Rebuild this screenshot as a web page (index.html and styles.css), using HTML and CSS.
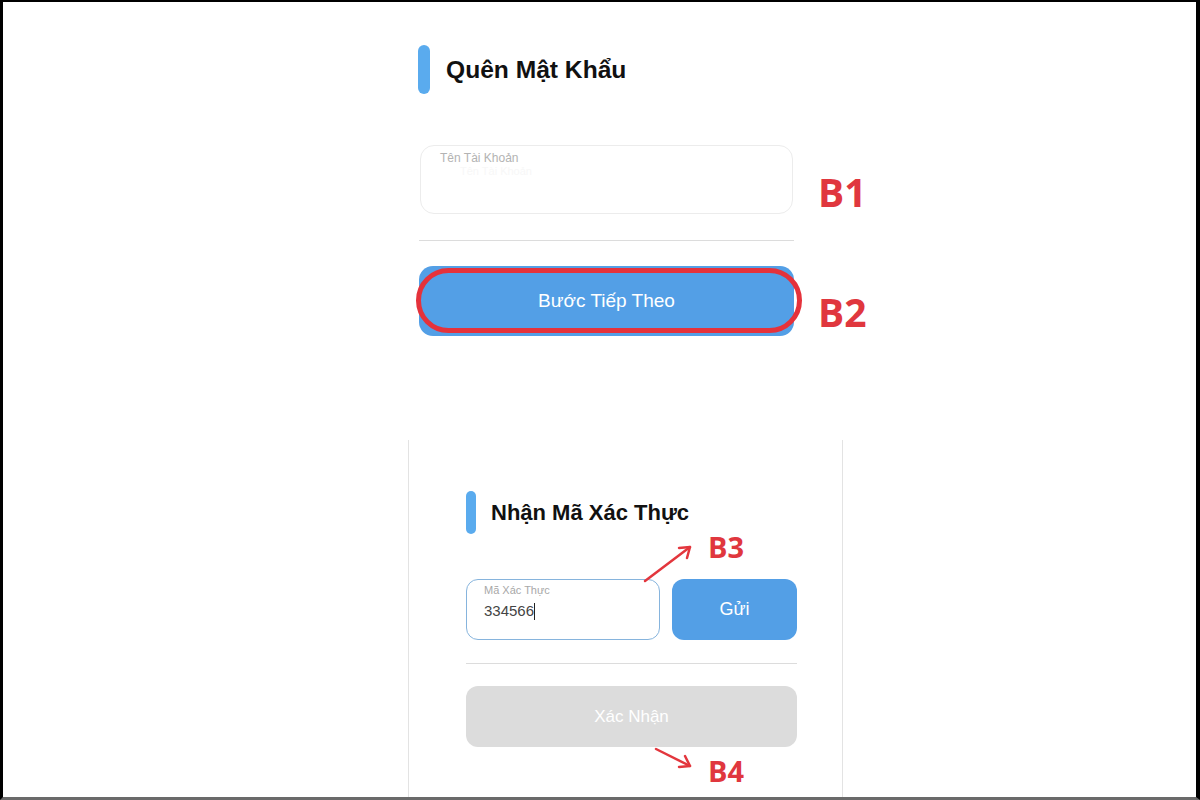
FILE: index.html
```html
<!DOCTYPE html>
<html lang="vi">
<head>
<meta charset="utf-8">
<title>Quên Mật Khẩu</title>
<link rel="stylesheet" href="styles.css">
</head>
<body>
<div class="page">
  <section class="top">
    <div class="heading">
      <span class="bar"></span>
      <h1 class="title">Quên Mật Khẩu</h1>
    </div>
    <div class="field field-user">
      <span class="label">Tên Tài Khoản</span>
      <span class="ghost">Tên Tài Khoản</span>
    </div>
    <hr class="rule">
    <button class="btn btn-primary btn-next">Bước Tiếp Theo</button>
  </section>

  <section class="card">
    <div class="heading heading-sm">
      <span class="bar bar-sm"></span>
      <h2 class="title title-sm">Nhận Mã Xác Thực</h2>
    </div>
    <div class="code-row">
      <div class="field field-code">
        <span class="label label-sm">Mã Xác Thực</span>
        <span class="value">334566<span class="caret"></span></span>
      </div>
      <button class="btn btn-primary btn-send">Gửi</button>
    </div>
    <hr class="rule rule-card">
    <button class="btn btn-disabled">Xác Nhận</button>
  </section>

  <div class="ring"></div>
  <span class="step step-b1">B1</span>
  <span class="step step-b2">B2</span>
  <span class="step step-sm step-b3">B3</span>
  <span class="step step-sm step-b4">B4</span>
  <svg class="arrows" width="1200" height="800" viewBox="0 0 1200 800">
    <g stroke="#e3363d" stroke-width="2.5" fill="none" stroke-linecap="round" stroke-linejoin="round">
      <path d="M645 581 L690 547"/>
      <path d="M679 548 L690 547 L687 558"/>
      <path d="M656 749 L690 766"/>
      <path d="M679 767 L690 766 L685 756"/>
    </g>
  </svg>
</div>
</body>
</html>
```

FILE: styles.css
```css
* { box-sizing: border-box; }
html, body { margin: 0; padding: 0; background: #000; }
body { font-family: "Liberation Sans", Arial, sans-serif; }

.page {
  position: relative;
  width: 1200px;
  height: 800px;
  background: #fff;
  border-top: 2px solid #000;
  border-left: 3px solid #000;
  border-right: 4px solid #000;
  border-bottom: 3px solid #6a6a6a;
  overflow: hidden;
}

.top {
  margin-left: 415px;
  padding-top: 43px;
  width: 390px;
}

.heading {
  display: flex;
  align-items: center;
  gap: 16px;
}
.bar {
  display: block;
  width: 12px;
  height: 49px;
  border-radius: 6px;
  background: #5aabee;
}
.title {
  margin: 0;
  font-size: 24.6px;
  font-weight: 700;
  color: #111;
}

.field {
  position: relative;
  background: #fff;
}
.field-user {
  margin-top: 51px;
  margin-left: 2px;
  width: 373px;
  height: 69px;
  border: 1px solid #ececec;
  border-radius: 14px;
  padding: 5px 0 0 19px;
  display: flex;
  flex-direction: column;
}
.label {
  font-size: 12px;
  color: #b3b3b3;
  line-height: 14px;
}
.ghost {
  font-size: 11px;
  color: #f7f7f7;
  line-height: 12px;
  margin-left: 20px;
}

.rule {
  margin: 26px 0 0 1px;
  width: 375px;
  border: 0;
  border-top: 1px solid #dcdcdc;
  height: 0;
}

.btn {
  display: flex;
  align-items: center;
  justify-content: center;
  border: 0;
  font-family: "Liberation Sans", Arial, sans-serif;
  color: #fff;
  padding: 0;
}
.btn-primary { background: #539fe6; }
.btn-next {
  margin-top: 25px;
  margin-left: 1px;
  width: 375px;
  height: 70px;
  border-radius: 14px;
  font-size: 19px;
}

.card {
  margin-top: 104px;
  margin-left: 405px;
  width: 435px;
  height: 358px;
  border-left: 1px solid #e3e3e3;
  border-right: 1px solid #e3e3e3;
  padding: 51px 0 0 57px;
}
.heading-sm { gap: 15px; }
.bar-sm {
  width: 10px;
  height: 43px;
  border-radius: 5px;
}
.title-sm { font-size: 22px; }

.code-row {
  display: flex;
  gap: 12px;
  margin-top: 45px;
}
.field-code {
  width: 194px;
  height: 61px;
  border: 1px solid #86b4dd;
  border-radius: 12px;
  padding: 4px 0 0 17px;
  display: flex;
  flex-direction: column;
}
.label-sm {
  font-size: 11px;
  line-height: 13px;
  color: #a8a8a8;
}
.value {
  margin-top: 5px;
  font-size: 15px;
  color: #444;
  line-height: 18px;
  display: flex;
  align-items: center;
}
.caret {
  display: inline-block;
  width: 1px;
  height: 17px;
  background: #222;
}
.btn-send {
  width: 125px;
  height: 61px;
  border-radius: 12px;
  font-size: 18px;
}
.rule-card {
  margin: 23px 0 0 0;
  width: 331px;
}
.btn-disabled {
  margin-top: 22px;
  width: 331px;
  height: 61px;
  border-radius: 12px;
  background: #dcdcdc;
  font-size: 17px;
}

.ring {
  position: absolute;
  left: 413px;
  top: 266px;
  width: 386px;
  height: 65px;
  border: 5px solid #e5323b;
  border-radius: 33px;
}
.step {
  position: absolute;
  font-family: "Open Sans", "DejaVu Sans", sans-serif;
  font-weight: 700;
  font-size: 39px;
  line-height: 1;
  color: #e0373e;
}
.step-b1 { left: 815px; top: 170px; }
.step-b2 { left: 815px; top: 290px; }
.step-sm { font-size: 29px; }
.step-b3 { left: 705px; top: 530px; }
.step-b4 { left: 705px; top: 754px; }
.arrows {
  position: absolute;
  left: -3px;
  top: -2px;
  pointer-events: none;
}
```
